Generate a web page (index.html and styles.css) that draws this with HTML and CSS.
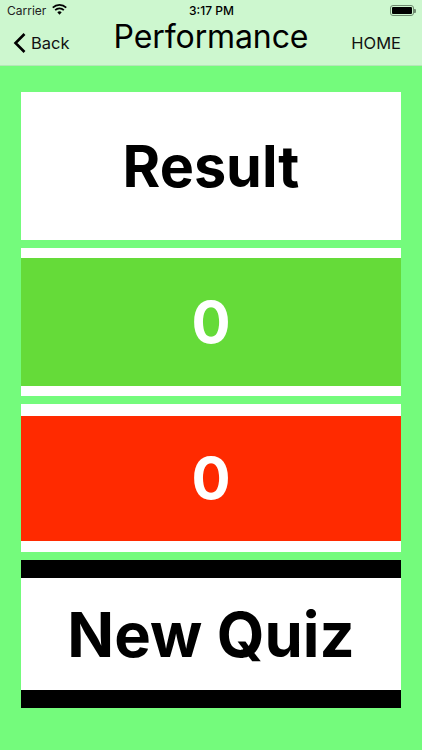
FILE: index.html
```html
<!DOCTYPE html>
<html lang="en">
<head>
<meta charset="utf-8">
<title>Performance</title>
<link rel="stylesheet" href="styles.css">
</head>
<body>
<header class="topbar">
  <div class="status">
    <div class="status-left">
      <span>Carrier</span>
      <svg class="wifi" viewBox="0 0 16 12" width="15" height="11"><path d="M8 11.6 5.6 9.1a3.4 3.4 0 0 1 4.8 0zM3.9 7.4 2.6 6a7.7 7.7 0 0 1 10.8 0l-1.3 1.4a5.8 5.8 0 0 0-8.2 0zM1.3 4.7 0 3.3a11.4 11.4 0 0 1 16 0l-1.3 1.4a9.5 9.5 0 0 0-13.4 0z" fill="#000"/></svg>
    </div>
    <span class="time">3:17 PM</span>
    <div class="battery"><span class="battery-fill"></span></div>
  </div>
  <nav class="nav">
    <a class="back">
      <svg viewBox="0 0 14 22" width="14" height="22"><path d="M11.5 2 2.5 11l9 9" fill="none" stroke="#000" stroke-width="2.6"/></svg>
      <span>Back</span>
    </a>
    <h1 class="title">Performance</h1>
    <a class="home">HOME</a>
  </nav>
</header>
<main class="stack">
  <div class="card"><div class="band band-white heading">Result</div></div>
  <div class="card pad-green"><div class="band band-green score">0</div></div>
  <div class="card pad-red"><div class="band band-red score">0</div></div>
  <div class="card pad-black"><div class="band band-white heading heading-wide">New Quiz</div></div>
</main>
</body>
</html>
```
FILE: styles.css
```css
* { box-sizing: border-box; margin: 0; padding: 0; }
html, body { height: 100%; }
body {
  width: 422px;
  height: 750px;
  overflow: hidden;
  background: #74fb7c;
  font-family: Inter, "Liberation Sans", sans-serif;
  color: #000;
}
.topbar {
  height: 66px;
  background: #cdf7cf;
  border-bottom: 1px solid #b5e6b8;
}
.status {
  height: 20px;
  padding: 1px 6px 0 7px;
  display: grid;
  grid-template-columns: 1fr auto 1fr;
  align-items: center;
  font-size: 12px;
}
.status-left { display: flex; align-items: center; gap: 6px; color: #222; }
.wifi { margin-top: -2px; }
.time { font-weight: 500; }
.battery {
  justify-self: end;
  width: 24px;
  height: 11px;
  border: 1px solid #6f8a70;
  border-radius: 3px;
  padding: 1px;
  margin-right: 2px;
  position: relative;
}
.battery::after {
  content: "";
  position: absolute;
  right: -3px;
  top: 3px;
  width: 2px;
  height: 4px;
  background: #6f8a70;
  border-radius: 0 1px 1px 0;
}
.battery-fill { display: block; height: 100%; background: #000; border-radius: 1px; }
.nav {
  height: 45px;
  display: grid;
  grid-template-columns: 1fr auto 1fr;
  align-items: center;
  padding: 0 13px;
}
.back { display: flex; align-items: center; gap: 4px; font-size: 16.5px; color: #111; }
.title { font-size: 32px; font-weight: 400; letter-spacing: -0.1px; line-height: 34px; margin-top: -11px; }
.home { justify-self: end; font-size: 16.5px; color: #111; margin-right: 8px; }
.stack {
  padding: 26px 21px 0;
  display: flex;
  flex-direction: column;
  gap: 8px;
}
.card { height: 148px; display: flex; flex-direction: column; }
.pad-green { background: #fff; padding: 10px 0; }
.pad-red { background: #fff; padding: 11.5px 0 11px; }
.pad-black { background: #000; padding: 18px 0; }
.band { flex: 1; display: flex; align-items: center; justify-content: center; font-weight: 700; }
.band-white { background: #fff; color: #000; }
.band-green { background: #65db39; color: #fff; }
.band-red { background: #ff2a00; color: #fff; }
.heading { font-size: 57.5px; }
.heading-wide { font-size: 61.5px; }
.score { font-size: 58px; }
```
